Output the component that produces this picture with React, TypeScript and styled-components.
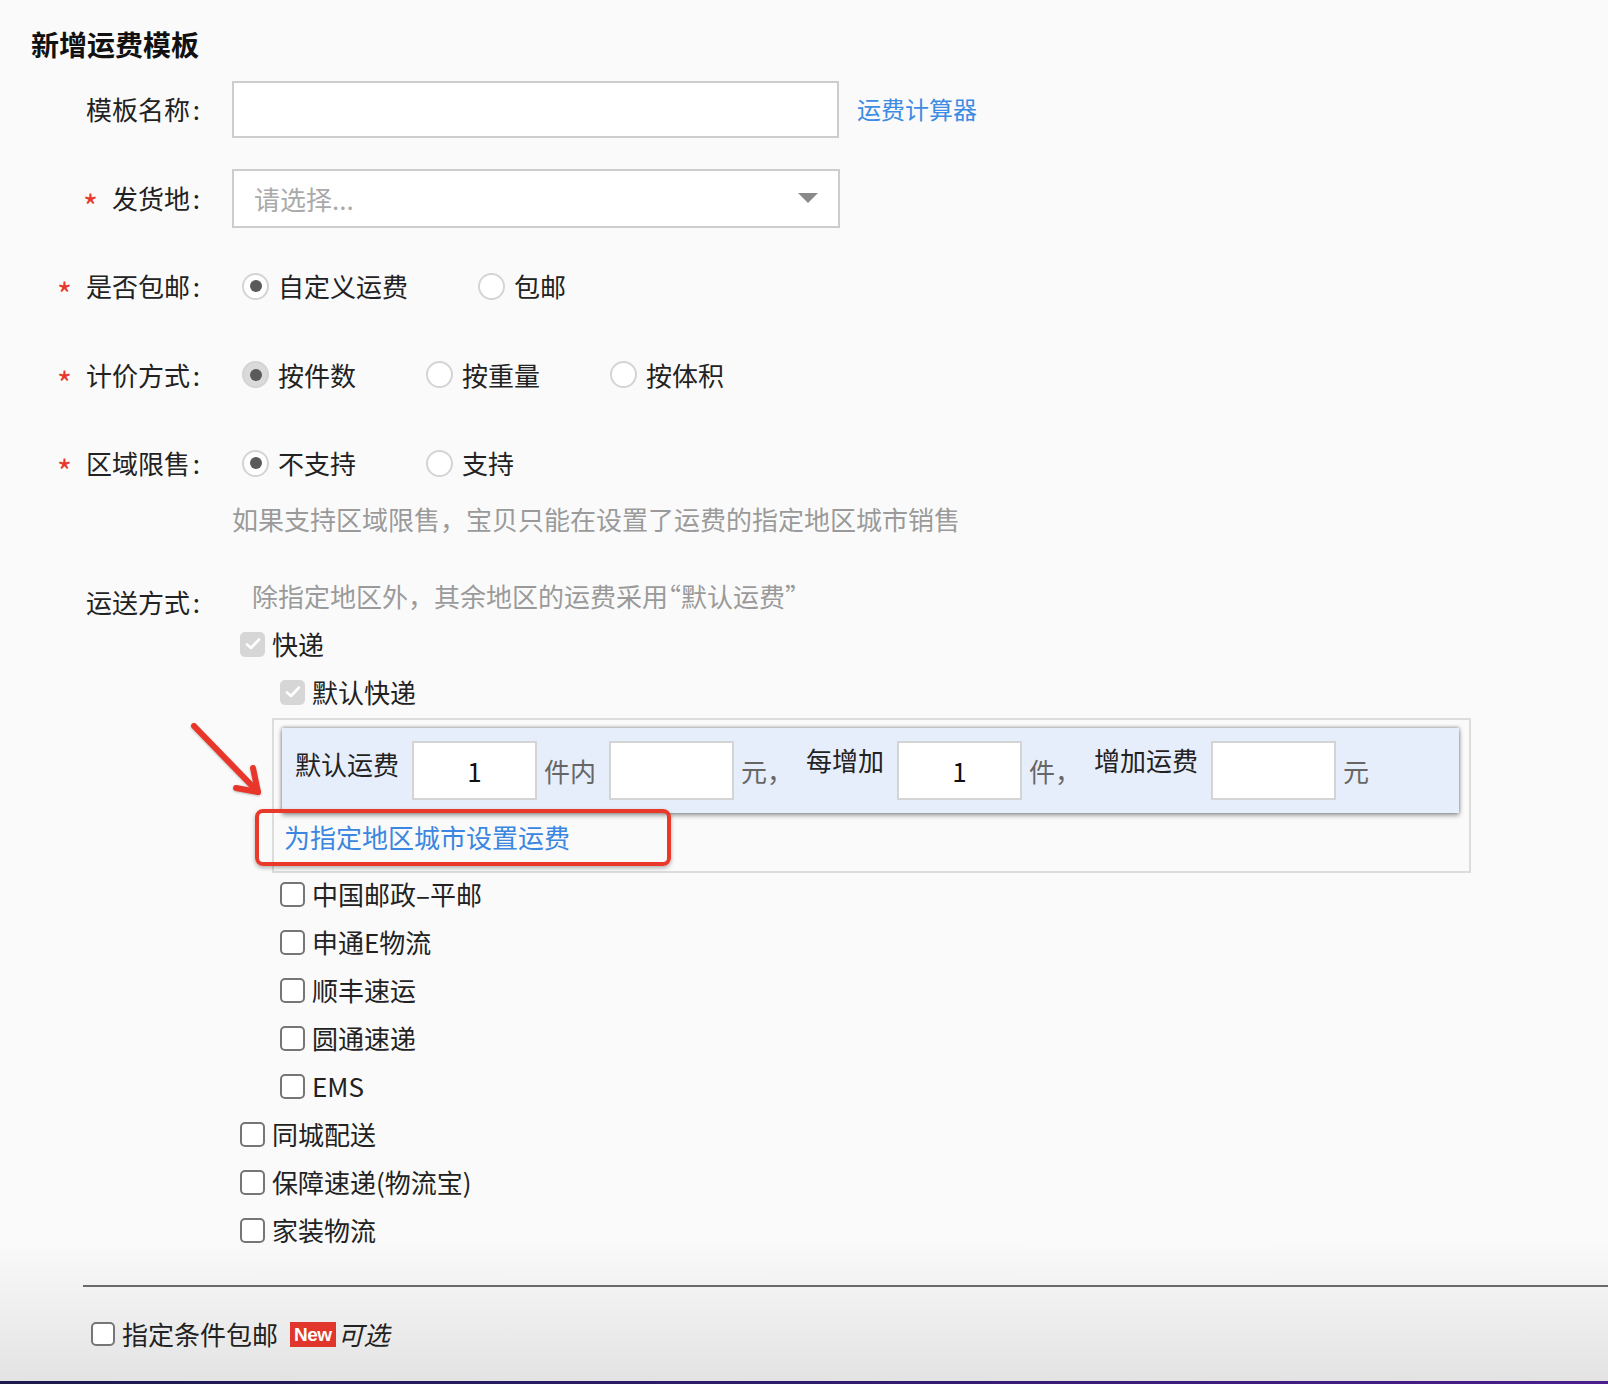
import React from "react";
import styled, { createGlobalStyle } from "styled-components";

const GlobalStyle = createGlobalStyle`
  html, body { margin: 0; padding: 0; }
  body {
    background: #fafafa;
    font-family: "Noto Sans CJK SC", "Noto Sans", sans-serif;
    color: #222;
  }
  * { box-sizing: border-box; }
`;

const Page = styled.div`
  width: 1608px;
  height: 1384px;
  display: flex;
  flex-direction: column;
  overflow: hidden;
  background: linear-gradient(to bottom, #fafafa 0, #fafafa 1240px, #e3e3e3 1381px);
`;

const Main = styled.main`
  display: flex;
  flex-direction: column;
`;

const Title = styled.h1`
  margin: 0;
  padding: 26px 0 0 31px;
  font-size: 28px;
  line-height: 36px;
  font-weight: 700;
  color: #111;
`;

const Form = styled.div`
  display: flex;
  flex-direction: column;
  gap: 30.5px;
  margin-top: 18px;
`;

const FieldRow = styled.div`
  display: grid;
  grid-template-columns: 200px auto;
  column-gap: 32px;
  align-items: center;
  height: 58px;
`;

const Label = styled.div<{ $top?: number }>`
  display: flex;
  justify-content: flex-end;
  align-items: center;
  font-size: 26px;
  line-height: 30px;
  color: #222;
  white-space: nowrap;
  padding-top: ${(p) => p.$top ?? 0}px;
`;

const Colon = styled.span`
  display: inline-block;
  width: 10px;
  text-align: right;
`;

const Star = styled.span`
  color: #e8382b;
  font-size: 32px;
  margin-right: 14px;
  transform: translateY(7px);
`;

const Control = styled.div`
  display: flex;
  align-items: center;
`;

const TextInput = styled.input`
  width: 607px;
  height: 57px;
  border: 2px solid #cdcdcd;
  background: #fff;
  font: inherit;
  font-size: 26px;
  padding: 0 18px;
  outline: none;
`;

const CalcLink = styled.a`
  margin-left: 18px;
  color: #3d8be2;
  font-size: 24px;
  line-height: 30px;
  text-decoration: none;
`;

const Select = styled.div`
  width: 608px;
  height: 59px;
  border: 2px solid #cdcdcd;
  background: #fff;
  display: flex;
  align-items: center;
  justify-content: space-between;
  padding: 0 20px 0 20px;
`;

const Placeholder = styled.span`
  font-size: 26px;
  color: #aaa;
`;

const Caret = styled.span`
  width: 0;
  height: 0;
  border-left: 10px solid transparent;
  border-right: 10px solid transparent;
  border-top: 10px solid #8a8a8a;
`;

const RadioGroup = styled.div`
  display: flex;
  align-items: center;
  gap: 70px;
  padding-left: 10px;
`;

const RadioOption = styled.label`
  display: flex;
  align-items: center;
  gap: 9px;
  font-size: 26px;
  line-height: 30px;
  color: #222;
`;

const RadioMark = styled.span<{ $checked?: boolean; $filled?: boolean }>`
  width: 27px;
  height: 27px;
  border-radius: 50%;
  border: 2px solid #d4d4d4;
  background: ${(p) => (p.$filled ? "#dadada" : "#fff")};
  display: flex;
  align-items: center;
  justify-content: center;
  flex: none;
  &::after {
    content: "";
    width: 12px;
    height: 12px;
    border-radius: 50%;
    background: #5a5a5a;
    display: ${(p) => (p.$checked ? "block" : "none")};
  }
`;

const Hint = styled.div`
  margin: 12px 0 0 232px;
  font-size: 26px;
  line-height: 30px;
  color: #9a9a9a;
`;

const ShipRow = styled.div`
  display: grid;
  grid-template-columns: 200px auto;
  column-gap: 32px;
  align-items: start;
  margin-top: 47px;
`;

const ShipContent = styled.div`
  display: flex;
  flex-direction: column;
`;

const ShipHint = styled.div`
  padding-left: 20px;
  font-size: 26px;
  line-height: 30px;
  color: #9a9a9a;
`;

const HalfPunct = styled.span`
  font-feature-settings: "halt";
`;

const CheckList = styled.div`
  display: flex;
  flex-direction: column;
  margin-top: 9px;
`;

const CheckItem = styled.label<{ $level: number }>`
  display: flex;
  align-items: center;
  gap: 7px;
  height: 48px;
  padding-left: ${(p) => (p.$level === 2 ? 48 : 8)}px;
  font-size: 26px;
  line-height: 30px;
  color: #222;
`;

const CheckBox = styled.span<{ $checked?: boolean; $size?: number }>`
  width: ${(p) => p.$size ?? 25}px;
  height: ${(p) => p.$size ?? 25}px;
  border-radius: 5px;
  flex: none;
  display: flex;
  align-items: center;
  justify-content: center;
  background: ${(p) => (p.$checked ? "#d6d6d6" : "#fff")};
  border: ${(p) => (p.$checked ? "none" : "2px solid #767676")};
`;

const FeeBox = styled.div`
  position: relative;
  width: 1199px;
  margin: 2px 0 -3px 40px;
  border: 2px solid #dcdcdc;
  padding: 8px 10px 19px 8px;
`;

const Panel = styled.div`
  display: flex;
  align-items: center;
  height: 85px;
  padding: 0 13px;
  background: #e7eefb;
  box-shadow: 0 2px 5px rgba(0, 0, 0, 0.45), 0 -1px 3px rgba(0, 0, 0, 0.25);
`;

const PanelLabel = styled.span<{ $raise: number }>`
  font-size: 26px;
  line-height: 30px;
  color: #222;
  margin-right: 13px;
  padding-bottom: ${(p) => p.$raise}px;
  white-space: nowrap;
`;

const NumInput = styled.input`
  width: 125px;
  height: 59px;
  flex: none;
  border: 2px solid #d4d4d4;
  background: #fff;
  font: inherit;
  font-size: 26px;
  color: #111;
  text-align: center;
  outline: none;
`;

const Unit = styled.span`
  font-size: 26px;
  line-height: 30px;
  color: #666;
  margin: 0 13px 0 7px;
  white-space: nowrap;
`;

const AreaLink = styled.a`
  display: block;
  margin-top: 9px;
  padding-left: 2px;
  font-size: 26px;
  line-height: 30px;
  color: #3a86e0;
  text-decoration: none;
`;

const RedFrame = styled.div`
  position: absolute;
  left: -19px;
  top: 89px;
  width: 416px;
  height: 57px;
  border: 4px solid #e8392b;
  border-radius: 8px;
  box-shadow: 0 2px 4px rgba(0, 0, 0, 0.3);
  pointer-events: none;
`;

const ArrowSvg = styled.svg`
  position: absolute;
  left: -84px;
  top: 2px;
  filter: drop-shadow(0 1px 1px rgba(0, 0, 0, 0.25));
  pointer-events: none;
`;

const Divider = styled.hr`
  margin: 31px 0 0 83px;
  border: none;
  height: 2px;
  background: #6a6a6a;
`;

const Footer = styled.footer`
  flex: 1;
  display: flex;
  align-items: center;
  padding-left: 91px;
  font-size: 26px;
  line-height: 30px;
  color: #222;
`;

const FooterText = styled.span`
  margin-left: 7px;
`;

const NewBadge = styled.span`
  margin-left: 12px;
  height: 25px;
  padding: 0 4px;
  background: #e0362b;
  color: #fff;
  font-family: "Liberation Sans", Arial, sans-serif;
  font-size: 19px;
  font-weight: 700;
  line-height: 25px;
  letter-spacing: -0.5px;
`;

const Optional = styled.span`
  margin-left: 2px;
  font-style: italic;
`;

const BottomStrip = styled.div`
  height: 3px;
  background: linear-gradient(90deg, #1c1a4c, #2f1b6c 50%, #4a1e8c);
`;

const Check = () => (
  <svg width="16" height="14" viewBox="0 0 16 14">
    <path d="M2 7.5 L6 11 L14 2.5" fill="none" stroke="#fff" strokeWidth="2.6" strokeLinecap="round" strokeLinejoin="round" />
  </svg>
);

const Req = () => <Star>*</Star>;

export default function App() {
  const inner = ["中国邮政–平邮", "申通E物流", "顺丰速运", "圆通速递", "EMS"];
  const outer = ["同城配送", "保障速递(物流宝)", "家装物流"];
  return (
    <Page lang="zh-CN">
      <GlobalStyle />
      <Main>
        <Title>新增运费模板</Title>
        <Form>
          <FieldRow>
            <Label>模板名称<Colon>:</Colon></Label>
            <Control>
              <TextInput />
              <CalcLink href="#">运费计算器</CalcLink>
            </Control>
          </FieldRow>
          <FieldRow>
            <Label><Req />发货地<Colon>:</Colon></Label>
            <Control>
              <Select>
                <Placeholder>请选择...</Placeholder>
                <Caret />
              </Select>
            </Control>
          </FieldRow>
          <FieldRow>
            <Label><Req />是否包邮<Colon>:</Colon></Label>
            <RadioGroup>
              <RadioOption><RadioMark $checked />自定义运费</RadioOption>
              <RadioOption><RadioMark />包邮</RadioOption>
            </RadioGroup>
          </FieldRow>
          <FieldRow>
            <Label><Req />计价方式<Colon>:</Colon></Label>
            <RadioGroup>
              <RadioOption><RadioMark $checked $filled />按件数</RadioOption>
              <RadioOption><RadioMark />按重量</RadioOption>
              <RadioOption><RadioMark />按体积</RadioOption>
            </RadioGroup>
          </FieldRow>
          <FieldRow>
            <Label><Req />区域限售<Colon>:</Colon></Label>
            <RadioGroup>
              <RadioOption><RadioMark $checked />不支持</RadioOption>
              <RadioOption><RadioMark />支持</RadioOption>
            </RadioGroup>
          </FieldRow>
        </Form>
        <Hint>如果支持区域限售，宝贝只能在设置了运费的指定地区城市销售</Hint>
        <ShipRow>
          <Label $top={6}>运送方式<Colon>:</Colon></Label>
          <ShipContent>
            <ShipHint>除指定地区外，其余地区的运费采用<HalfPunct>“</HalfPunct>默认运费”</ShipHint>
            <CheckList>
              <CheckItem $level={1}><CheckBox $checked><Check /></CheckBox>快递</CheckItem>
              <CheckItem $level={2}><CheckBox $checked><Check /></CheckBox>默认快递</CheckItem>
              <FeeBox>
                <Panel>
                  <PanelLabel $raise={14}>默认运费</PanelLabel>
                  <NumInput defaultValue="1" />
                  <Unit>件内</Unit>
                  <NumInput />
                  <Unit>元，</Unit>
                  <PanelLabel $raise={22}>每增加</PanelLabel>
                  <NumInput defaultValue="1" />
                  <Unit>件，</Unit>
                  <PanelLabel $raise={22}>增加运费</PanelLabel>
                  <NumInput />
                  <Unit>元</Unit>
                </Panel>
                <AreaLink href="#">为指定地区城市设置运费</AreaLink>
                <RedFrame />
                <ArrowSvg width="80" height="76" viewBox="0 0 80 76">
                  <g fill="none" stroke="#e8362a" strokeWidth="6" strokeLinecap="round" strokeLinejoin="round">
                    <path d="M4 4 L68 70" />
                    <path d="M63 46 L68 70 L46 66" />
                  </g>
                </ArrowSvg>
              </FeeBox>
              {inner.map((t) => (
                <CheckItem key={t} $level={2}><CheckBox />{t}</CheckItem>
              ))}
              {outer.map((t) => (
                <CheckItem key={t} $level={1}><CheckBox />{t}</CheckItem>
              ))}
            </CheckList>
          </ShipContent>
        </ShipRow>
        <Divider />
      </Main>
      <Footer>
        <CheckBox $size={24} />
        <FooterText>指定条件包邮</FooterText>
        <NewBadge>New</NewBadge>
        <Optional>可选</Optional>
      </Footer>
      <BottomStrip />
    </Page>
  );
}
